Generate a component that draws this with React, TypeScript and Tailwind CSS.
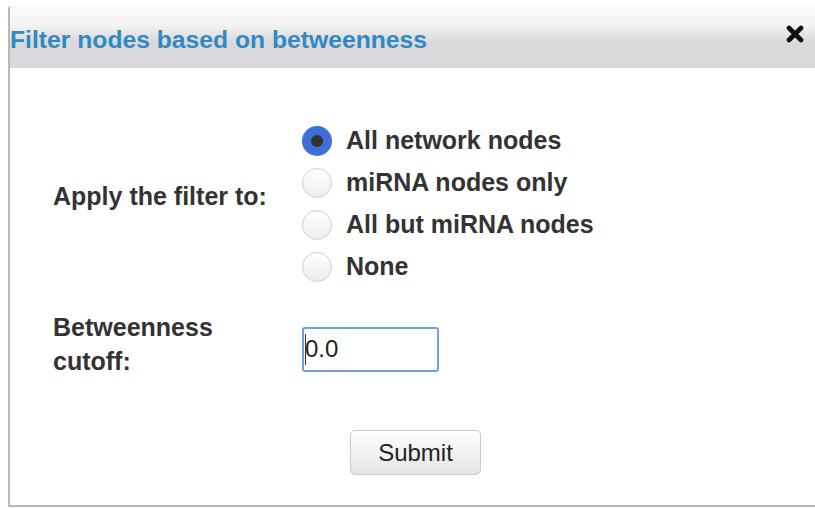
import { useState } from 'react';

const targets = [
    { id: 'all', label: 'All network nodes' },
    { id: 'mirna', label: 'miRNA nodes only' },
    { id: 'nonmirna', label: 'All but miRNA nodes' },
    { id: 'none', label: 'None' },
];

function Radio({ checked }: { checked: boolean }) {
    if (checked) {
        return (
            <span className="flex h-[30px] w-[30px] shrink-0 items-center justify-center rounded-full bg-[#3c6fd8]">
                <span className="h-[12px] w-[12px] rounded-full bg-[#333]" />
            </span>
        );
    }
    return (
        <span className="h-[30px] w-[30px] shrink-0 rounded-full border border-[#cfcfcf] bg-[linear-gradient(to_bottom,#ffffff,#ededed)]" />
    );
}

export default function App() {
    const [target, setTarget] = useState('all');

    return (
        <div className="h-[509px] w-[815px] overflow-hidden bg-white pl-2 pt-[6px] font-['Liberation_Sans',Arial,sans-serif]">
            <div className="flex h-[501px] flex-col rounded-tl-[3px] border-b-2 border-l-2 border-[#b8b8b8]">
                <div className="flex h-[62px] items-center justify-between bg-[linear-gradient(to_bottom,#fbfbfb_0%,#f3f3f3_30%,#dadadc_58%,#d9d9db_100%)] pr-[10px]">
                    <span className="mt-[6px] whitespace-nowrap text-[24.7px] font-bold text-[#3189c3]">
                        Filter nodes based on betweenness
                    </span>
                    <svg width="20" height="18" viewBox="0 0 20 18" className="-mt-[6px]">
                        <path d="M4 3 L16 15 M16 3 L4 15" stroke="#111" strokeWidth="4.6" strokeLinecap="round" />
                    </svg>
                </div>

                <div className="flex flex-col pl-[43px] text-[25px] text-[#333]">
                    <div className="mt-[58px] flex items-center">
                        <span className="w-[249px] pb-[14px] font-bold">Apply the filter to:</span>
                        <div className="flex flex-col gap-[12px]">
                            {targets.map((t) => (
                                <label
                                    key={t.id}
                                    onClick={() => setTarget(t.id)}
                                    className="flex h-[30px] cursor-pointer items-center gap-[14px] font-bold"
                                >
                                    <Radio checked={target === t.id} />
                                    <span>{t.label}</span>
                                </label>
                            ))}
                        </div>
                    </div>

                    <div className="mt-[28px] flex items-center">
                        <span className="w-[249px] pb-[10px] font-bold leading-[34px]">
                            Betweenness
                            <br />
                            cutoff:
                        </span>
                        <div className="relative">
                            <input
                                defaultValue="0.0"
                                className="h-[45px] w-[137px] rounded-[3px] border-2 border-[#6f9fe8] px-[1px] text-[24px] text-[#222] outline-none"
                            />
                            {/* text caret at the start of the field */}
                            <span className="absolute left-[3px] top-[7px] h-[31px] w-px bg-[#333]" />
                        </div>
                    </div>

                    <div className="mt-[42px] flex pl-[297px]">
                        <button className="h-[45px] w-[131px] rounded-[5px] border border-[#cacaca] bg-[linear-gradient(to_bottom,#ffffff,#e4e4e4)] text-[24px] text-[#222]">
                            Submit
                        </button>
                    </div>
                </div>
            </div>
        </div>
    );
}
